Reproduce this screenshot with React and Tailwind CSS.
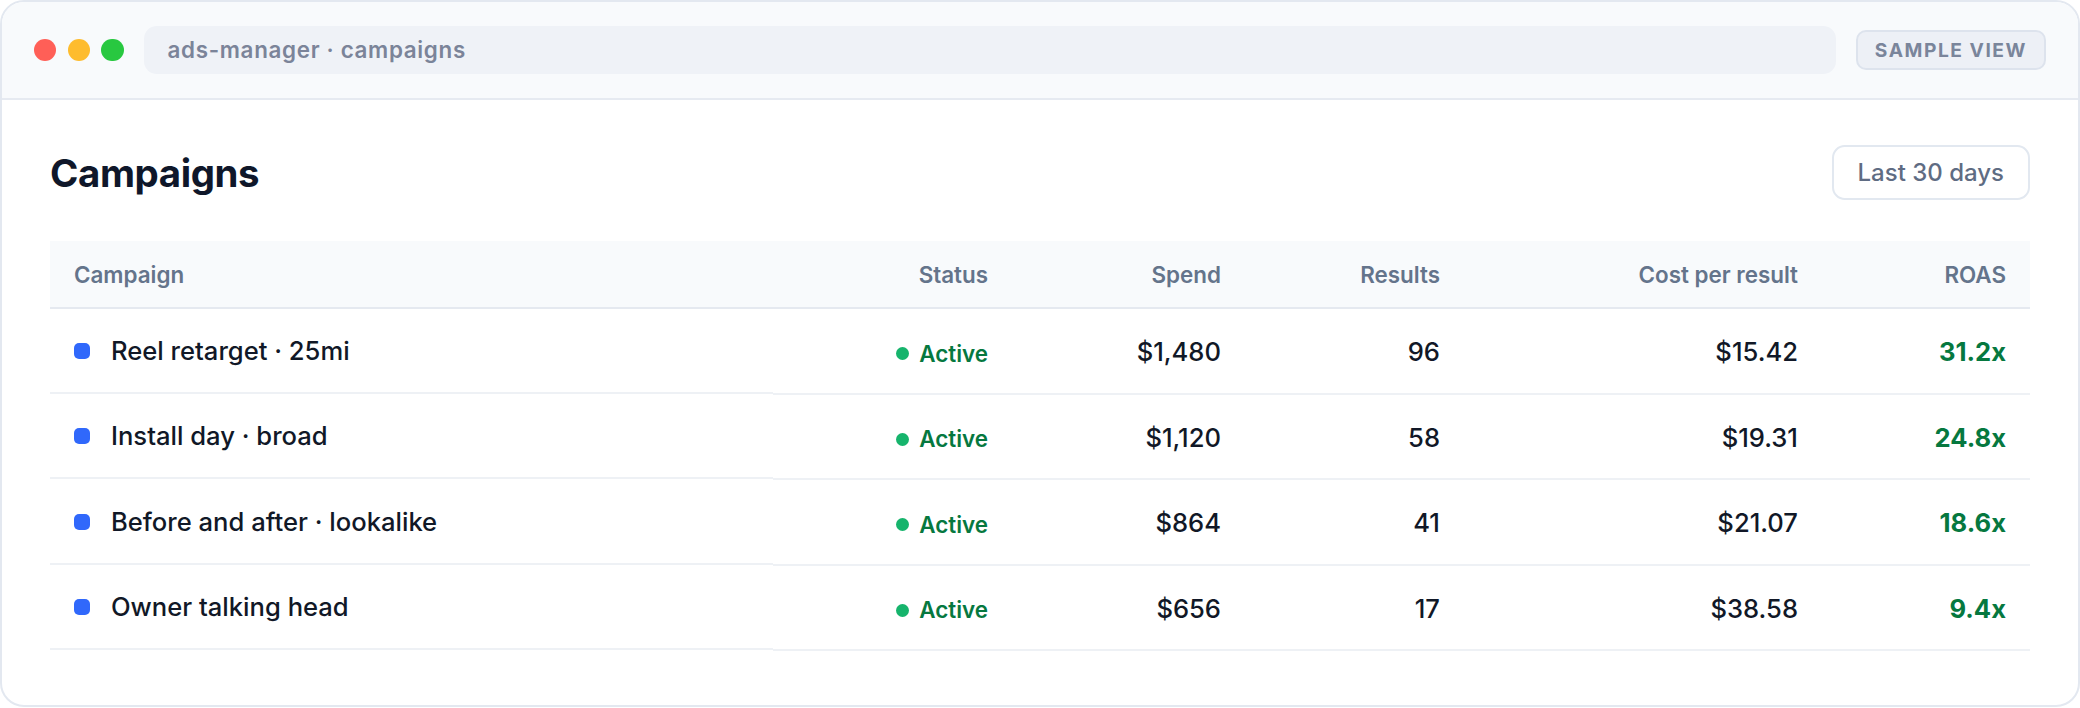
import React from 'react';

const rows = [
  { name: 'Reel retarget · 25mi', spend: '$1,480', results: '96', cpr: '$15.42', roas: '31.2x' },
  { name: 'Install day · broad', spend: '$1,120', results: '58', cpr: '$19.31', roas: '24.8x' },
  { name: 'Before and after · lookalike', spend: '$864', results: '41', cpr: '$21.07', roas: '18.6x' },
  { name: 'Owner talking head', spend: '$656', results: '17', cpr: '$38.58', roas: '9.4x' },
];

// column widths taken from the reference (px)
const cols = 'grid grid-cols-[723px_239px_233px_219px_358px_208px]';

const App = () => {
  return (
    <div className="w-[2080px] bg-white font-['Inter','Noto_Sans',sans-serif]">
      <div className="rounded-[24px] border-2 border-[#e3e8f0] bg-white overflow-hidden">
        {/* window title bar */}
        <div className="h-[98px] flex items-center px-8 bg-[#f8fafc] border-b-2 border-[#e6eaf1]">
          <div className="flex items-center gap-[11.2px]">
            <span className="w-[22.4px] h-[22.4px] rounded-full bg-[#ff5f57]" />
            <span className="w-[22.4px] h-[22.4px] rounded-full bg-[#febc2e]" />
            <span className="w-[22.4px] h-[22.4px] rounded-full bg-[#28c840]" />
          </div>
          <div className="ml-5 flex-1 h-12 rounded-[12.8px] bg-[#eff2f7] flex items-center px-6 text-[22.4px] font-semibold tracking-[0.03em] text-[#7b8499]">
            ads-manager · campaigns
          </div>
          <div className="ml-5 h-10 px-[17px] rounded-[10px] border-2 border-[#dde3ed] bg-[#edf0f6] flex items-center text-[19.2px] font-bold tracking-[0.08em] text-[#7a859b]">
            SAMPLE VIEW
          </div>
        </div>

        {/* page content */}
        <div className="px-12 pt-[45px] pb-[54px]">
          <div className="h-[55px] flex items-center justify-between mb-[41px]">
            <h1 className="pt-[2px] text-[38.4px] font-bold tracking-[-0.01em] text-[#0f172a] leading-none">Campaigns</h1>
            <button className="h-[55px] px-[24px] rounded-[12.8px] border-2 border-[#e2e8f0] bg-white text-[24px] font-medium text-[#5f6c83]">
              Last 30 days
            </button>
          </div>

          <div>
            <div className={`${cols} h-[68px] bg-[#f8fafc] border-b-2 border-[#e5e9f0] text-[22.4px] font-semibold text-[#64748b]`}>
              <div className="px-6 pt-[2px] flex items-center">Campaign</div>
              <div className="px-6 pt-[2px] flex items-center justify-end">Status</div>
              <div className="px-6 pt-[2px] flex items-center justify-end">Spend</div>
              <div className="px-6 pt-[2px] flex items-center justify-end">Results</div>
              <div className="px-6 pt-[2px] flex items-center justify-end">Cost per result</div>
              <div className="px-6 pt-[2px] flex items-center justify-end">ROAS</div>
            </div>

            {rows.map((row) => (
              <div key={row.name} className={`${cols} h-[85.5px] text-[25.6px] font-medium text-[#111827]`}>
                <div className="px-6 pt-[2px] flex items-center gap-[21px] border-b-2 border-[#eef1f5] -translate-y-px">
                  <span className="w-4 h-4 rounded-[5px] bg-[#3068fb]" />
                  <span>{row.name}</span>
                </div>
                <div className="px-6 pt-[6px] flex items-center justify-end gap-[10px] border-b-2 border-[#eef1f5]">
                  <span className="w-[12.8px] h-[12.8px] rounded-full bg-[#16b46c]" />
                  <span className="text-[22.4px] font-semibold text-[#06783f]">Active</span>
                </div>
                <div className="px-6 pt-[3px] flex items-center justify-end border-b-2 border-[#eef1f5]">{row.spend}</div>
                <div className="px-6 pt-[3px] flex items-center justify-end border-b-2 border-[#eef1f5]">{row.results}</div>
                <div className="px-6 pt-[3px] flex items-center justify-end border-b-2 border-[#eef1f5]">{row.cpr}</div>
                <div className="px-6 pt-[3px] flex items-center justify-end border-b-2 border-[#eef1f5] font-bold text-[#06783f]">{row.roas}</div>
              </div>
            ))}
          </div>
        </div>
      </div>
    </div>
  );
};

export default App;
